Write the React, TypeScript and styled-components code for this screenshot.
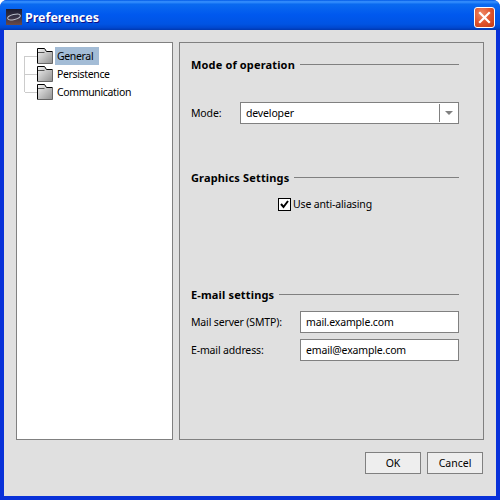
import React from 'react';
import styled, { createGlobalStyle } from 'styled-components';

const GlobalStyle = createGlobalStyle`
	html, body {
		margin: 0;
		padding: 0;
		background: #fff;
	}
	body {
		font-family: 'Noto Sans', 'DejaVu Sans', sans-serif;
		font-size: 10.5px;
		letter-spacing: -0.15px;
		color: #000;
	}
`;

const Window = styled.div`
	width: 500px;
	height: 500px;
	box-sizing: border-box;
	display: flex;
	flex-direction: column;
	background: #0831d9;
	border-radius: 7px 7px 0 0;
	overflow: hidden;
`;

const TitleBar = styled.div`
	height: 30px;
	flex: none;
	box-sizing: border-box;
	display: flex;
	align-items: center;
	padding: 4px 5px 0 6px;
	gap: 3px;
	background: linear-gradient(
		to bottom,
		#0058e6 0%,
		#3a93ff 6%,
		#0a6af0 14%,
		#0058ee 50%,
		#0054e3 80%,
		#0048d0 92%,
		#0038b0 100%
	);
`;

const Title = styled.span`
	flex: 1;
	color: #fff;
	font-size: 12.5px;
	font-weight: 700;
	letter-spacing: 0;
	text-shadow: 1px 1px 0 #0f1089;
`;

const CloseButton = styled.div`
	width: 21px;
	height: 21px;
	box-sizing: border-box;
	border: 1px solid #fff;
	border-radius: 3px;
	background: radial-gradient(circle at 35% 30%, #ef8a66 0%, #e0552f 50%, #c23a14 100%);
	display: flex;
	align-items: center;
	justify-content: center;
`;

const Body = styled.div`
	flex: 1;
	min-height: 0;
	margin: 0 4px 4px 4px;
	padding: 12px 12px 0 12px;
	background: #e0e0e0;
	display: flex;
	flex-direction: column;
`;

const Panes = styled.div`
	height: 398px;
	flex: none;
	display: flex;
	gap: 6px;
`;

const TreePane = styled.div`
	width: 157px;
	box-sizing: border-box;
	border: 1px solid #808080;
	background: #fff;
	padding: 4px 0 0 20px;
	display: flex;
	flex-direction: column;
	position: relative;
`;

const TreeRow = styled.div`
	height: 18px;
	display: flex;
	align-items: center;
	position: relative;
	padding-left: 18px;
`;

const TreeLines = styled.div`
	position: absolute;
	left: 7px;
	top: 13px;
	width: 12px;
	height: 36px;
	border-left: 1px solid #cccccc;
	&::before,
	&::after {
		content: '';
		position: absolute;
		left: 0;
		width: 12px;
		border-top: 1px solid #cccccc;
	}
	&::before {
		top: 0;
		box-shadow: 0 18px 0 #cccccc;
	}
	&::after {
		top: 36px;
	}
`;

const FolderWrap = styled.svg`
	position: absolute;
	left: 0;
	top: 0;
`;

const TreeLabel = styled.span<{ $selected?: boolean }>`
	padding: 0 6px 0 2px;
	line-height: 18px;
	letter-spacing: -0.35px;
	background: ${({ $selected }) => ($selected ? '#a3bcd6' : 'transparent')};
`;

const SettingsPane = styled.div`
	width: 305px;
	box-sizing: border-box;
	border: 1px solid #808080;
	padding: 0 24px 0 11px;
	display: flex;
	flex-direction: column;
`;

const Heading = styled.div<{ $top: number }>`
	margin-top: ${({ $top }) => $top}px;
	height: 14px;
	display: flex;
	align-items: center;
	gap: 5px;
	font-weight: 700;
	font-size: 11px;
	letter-spacing: 0.15px;
	&::after {
		content: '';
		flex: 1;
		border-top: 1px solid #808080;
	}
`;

const ModeRow = styled.div`
	margin-top: 31px;
	display: flex;
	align-items: center;
`;

const FieldLabel = styled.label<{ $width: number }>`
	width: ${({ $width }) => $width}px;
	flex: none;
`;

const Select = styled.div`
	flex: 1;
	height: 22px;
	box-sizing: border-box;
	border: 1px solid #808080;
	background: #fff;
	display: flex;
	align-items: center;
	padding-left: 5px;
`;

const SelectValue = styled.span`
	flex: 1;
`;

const SelectArrow = styled.div`
	width: 19px;
	height: 18px;
	box-sizing: border-box;
	border-left: 1px solid #808080;
	display: flex;
	align-items: center;
	justify-content: center;
	&::after {
		content: '';
		border-left: 4px solid transparent;
		border-right: 4px solid transparent;
		border-top: 4px solid #808080;
	}
`;

const CheckRow = styled.div`
	margin-top: 13px;
	padding-left: 87px;
	display: flex;
	align-items: center;
	gap: 2px;
`;

const CheckBox = styled.span`
	width: 13px;
	height: 13px;
	box-sizing: border-box;
	border: 1px solid #000;
	background: #fff;
	display: flex;
	align-items: center;
	justify-content: center;
`;

const FieldRow = styled.div<{ $top: number }>`
	margin-top: ${({ $top }) => $top}px;
	display: flex;
	align-items: center;
`;

const TextField = styled.div`
	flex: 1;
	height: 22px;
	box-sizing: border-box;
	border: 1px solid #808080;
	background: #fff;
	padding-left: 5px;
	line-height: 20px;
`;

const ButtonBar = styled.div`
	margin-top: 12px;
	display: flex;
	justify-content: flex-end;
	gap: 6px;
	padding-right: 1px;
`;

const Button = styled.button`
	width: 56px;
	height: 22px;
	box-sizing: border-box;
	border: 1px solid #808080;
	background: #eeeeee;
	padding: 0;
	font: inherit;
	color: #000;
`;

const Folder = () => (
	<FolderWrap width="17" height="18" viewBox="0 0 17 18">
		<defs>
			<linearGradient id="folderFill" x1="0" y1="0" x2="1" y2="1">
				<stop offset="0" stopColor="#f4f4f4" />
				<stop offset="1" stopColor="#909090" />
			</linearGradient>
		</defs>
		<path d="M0.5 1.5 H7.5 L9.5 4.5 H15.5 V16.5 H0.5 Z" fill="url(#folderFill)" />
		<path d="M0.5 16.5 V1.5 H7.5 L9.5 4.5 H15.5" fill="none" stroke="#000" />
		<path d="M15.5 4.5 V16.5 H0.5" fill="none" stroke="#666" />
		<path d="M1 5.5 H7.5" stroke="#555" />
	</FolderWrap>
);

const AppIcon = () => (
	<svg width="16" height="16" viewBox="0 0 16 16">
		<defs>
			<linearGradient id="appIconFill" x1="0" y1="0" x2="0" y2="1">
				<stop offset="0" stopColor="#1c1c30" />
				<stop offset="0.55" stopColor="#3a3448" />
				<stop offset="1" stopColor="#6e4a44" />
			</linearGradient>
		</defs>
		<rect width="16" height="16" fill="url(#appIconFill)" />
		<ellipse
			cx="8"
			cy="8"
			rx="6.5"
			ry="2.5"
			fill="none"
			stroke="#b8bcc8"
			strokeWidth="1"
			transform="rotate(-15 8 8)"
		/>
	</svg>
);

const App: React.FC = () => {
	return (
		<>
			<GlobalStyle />
			<Window>
				<TitleBar>
					<AppIcon />
					<Title>Preferences</Title>
					<CloseButton>
						<svg width="13" height="13" viewBox="0 0 13 13">
							<path
								d="M2 2 L11 11 M11 2 L2 11"
								stroke="#fff"
								strokeWidth="2.2"
								strokeLinecap="square"
							/>
						</svg>
					</CloseButton>
				</TitleBar>
				<Body>
					<Panes>
						<TreePane>
							<TreeLines />
							<TreeRow>
								<Folder />
								<TreeLabel $selected>General</TreeLabel>
							</TreeRow>
							<TreeRow>
								<Folder />
								<TreeLabel>Persistence</TreeLabel>
							</TreeRow>
							<TreeRow>
								<Folder />
								<TreeLabel>Communication</TreeLabel>
							</TreeRow>
						</TreePane>
						<SettingsPane>
							<Heading $top={14}>Mode of operation</Heading>
							<ModeRow>
								<FieldLabel $width={49}>Mode:</FieldLabel>
								<Select>
									<SelectValue>developer</SelectValue>
									<SelectArrow />
								</Select>
							</ModeRow>
							<Heading $top={46}>Graphics Settings</Heading>
							<CheckRow>
								<CheckBox>
									<svg width="11" height="11" viewBox="0 0 11 11">
										<path d="M2 5 L4.5 8 L9 2" fill="none" stroke="#000" strokeWidth="2" />
									</svg>
								</CheckBox>
								Use anti-aliasing
							</CheckRow>
							<Heading $top={76}>E-mail settings</Heading>
							<FieldRow $top={10}>
								<FieldLabel $width={109}>Mail server (SMTP):</FieldLabel>
								<TextField>mail.example.com</TextField>
							</FieldRow>
							<FieldRow $top={6}>
								<FieldLabel $width={109}>E-mail address:</FieldLabel>
								<TextField>email@example.com</TextField>
							</FieldRow>
						</SettingsPane>
					</Panes>
					<ButtonBar>
						<Button>OK</Button>
						<Button>Cancel</Button>
					</ButtonBar>
				</Body>
			</Window>
		</>
	);
};

export default App;
